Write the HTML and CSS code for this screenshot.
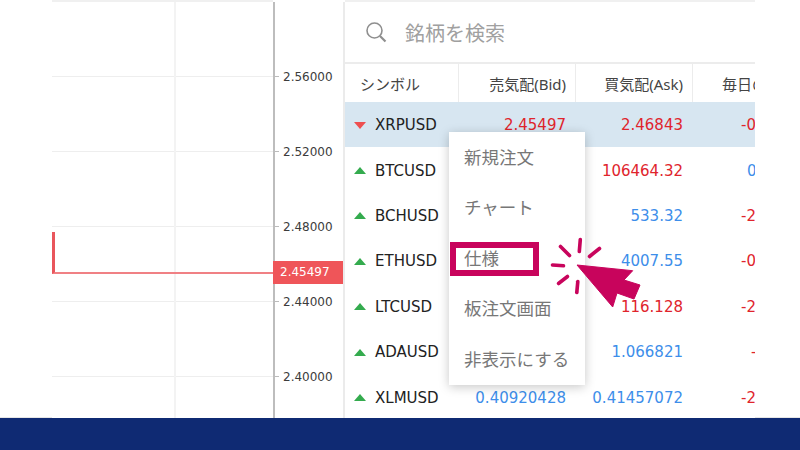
FILE: index.html
```html
<!DOCTYPE html>
<html lang="ja">
<head>
<meta charset="utf-8">
<title>銘柄</title>
<link rel="stylesheet" href="styles.css">
</head>
<body>
<div class="stage">
  <div class="main">
    <div class="chart">
      <div class="price-line"></div>
    </div>
    <div class="axis">
      <div class="tick">2.56000</div>
      <div class="tick">2.52000</div>
      <div class="tick">2.48000</div>
      <div class="tick">2.44000</div>
      <div class="tick">2.40000</div>
      <div class="price-tag">2.45497</div>
    </div>
    <div class="panel">
      <div class="search">
        <svg class="search-icon" width="22" height="22" viewBox="0 0 22 22"><circle cx="9.5" cy="9.5" r="7.5" fill="none" stroke="#8f8f8f" stroke-width="1.6"/><path d="M15 15l5.500 5.500" stroke="#8f8f8f" stroke-width="2.2" fill="none"/></svg>
        <span>銘柄を検索</span>
      </div>
      <div class="row head">
        <div class="c sym">シンボル</div><div class="c num">売気配(Bid)</div><div class="c num">買気配(Ask)</div><div class="c day">毎日の</div>
      </div>
      <div class="row sel">
        <div class="c sym"><i class="dn"></i>XRPUSD</div><div class="c num red">2.45497</div><div class="c num red">2.46843</div><div class="c day red">-0.55%</div>
      </div>
      <div class="row">
        <div class="c sym"><i class="up"></i>BTCUSD</div><div class="c num red">106123.32</div><div class="c num red">106464.32</div><div class="c day blue pos">0.12%</div>
      </div>
      <div class="row">
        <div class="c sym"><i class="up"></i>BCHUSD</div><div class="c num blue">530.32</div><div class="c num blue">533.32</div><div class="c day red">-2.10%</div>
      </div>
      <div class="row">
        <div class="c sym"><i class="up"></i>ETHUSD</div><div class="c num blue">4001.55</div><div class="c num blue">4007.55</div><div class="c day red">-0.32%</div>
      </div>
      <div class="row">
        <div class="c sym"><i class="up"></i>LTCUSD</div><div class="c num red">115.128</div><div class="c num red">116.128</div><div class="c day red">-2.05%</div>
      </div>
      <div class="row">
        <div class="c sym"><i class="up"></i>ADAUSD</div><div class="c num blue">1.056821</div><div class="c num blue">1.066821</div><div class="c day red dash">-</div>
      </div>
      <div class="row">
        <div class="c sym"><i class="up"></i>XLMUSD</div><div class="c num blue">0.40920428</div><div class="c num blue">0.41457072</div><div class="c day red">-2.40%</div>
      </div>
    </div>
  </div>
  <div class="footer"></div>

  <div class="menu">
    <div class="item">新規注文</div>
    <div class="item">チャート</div>
    <div class="item">仕様</div>
    <div class="item">板注文画面</div>
    <div class="item">非表示にする</div>
  </div>
  <div class="mark"></div>
  <svg class="pointer" width="100" height="80" viewBox="545 235 100 80">
    <path d="M577 265L632.7 270.7L624 280L640 285L634 299L617 293L612.7 307Z" fill="#c8045c" stroke="#c8045c" stroke-width="1" stroke-linejoin="round"/>
    <g stroke="#c8045c" stroke-width="3.6" stroke-linecap="round" fill="none">
      <path d="M580.300 239.500L579.300 251.500"/>
      <path d="M599.500 248.500L589.500 256.500"/>
      <path d="M560.500 246.500L569.500 255.500"/>
      <path d="M552.500 265L563.500 265.800"/>
      <path d="M567.500 276.500L558.500 283.500"/>
      <path d="M577.800 281.500L576.800 292.500"/>
    </g>
  </svg>
</div>
</body>
</html>
```
FILE: styles.css
```css
* { box-sizing: border-box; }
html, body { margin: 0; padding: 0; background: #fff; }
body { font-family: "DejaVu Sans", "Noto Sans CJK JP", sans-serif; }
.stage { position: relative; width: 800px; height: 450px; overflow: hidden; display: flex; flex-direction: column; background: #fff; }
.main {
  height: 418px;
  flex: none;
  display: flex;
  padding-left: 52px;
  background:
    linear-gradient(#e6e6e6, #e6e6e6) 0 100% / 52px 1px no-repeat,
    linear-gradient(#e6e6e6, #e6e6e6) 100% 100% / 45px 1px no-repeat;
}
.footer { height: 32px; flex: none; background: #0f2a73; }

.chart {
  position: relative;
  width: 221px;
  border-top: 2px solid #f0f0f0;
  background:
    linear-gradient(#f3f3f3, #f3f3f3) 122px 0 / 2px 100% no-repeat,
    repeating-linear-gradient(to bottom, transparent 0, transparent 74px, #eeeeee 74px, #eeeeee 75px) 0 0 / 100% 100%;
}
.price-line { position: absolute; left: 0; top: 230px; width: 221px; height: 42px; border-left: 3px solid #e9565c; border-bottom: 2px solid #f08084; }

.axis {
  position: relative;
  width: 72px;
  border-left: 2px solid #bdbdbd;
  border-right: 2px solid #ebebeb;
  margin-top: 2px;
  padding-top: 37px;
  display: flex;
  flex-direction: column;
}
.tick { height: 75px; flex: none; display: flex; align-items: center; padding: 1px 0 0 8px; font-size: 12px; color: #3c3c3c; position: relative; }
.tick::before { content: ""; position: absolute; left: 0; top: 37px; width: 4px; height: 1px; background: #bbb; }
.price-tag { position: absolute; left: -2px; top: 259px; width: 70px; height: 23px; background: #ef5559; color: #fff; font-size: 12px; line-height: 23px; padding-left: 7px; }

.panel { width: 410px; display: flex; flex-direction: column; overflow: hidden; border-top: 2px solid #f0f0f0; }
.search { height: 62px; flex: none; display: flex; align-items: center; gap: 18px; padding-left: 20px; border-bottom: 2px solid #ececec; font-size: 20px; color: #a0a0a0; font-family: "Noto Sans CJK JP", sans-serif; }
.search-icon { flex: none; }
.row { display: grid; flex: none; grid-template-columns: 113px 117px 117px 63px; height: 45.4px; padding-top: 1px; align-items: center; font-size: 15px; color: #222; white-space: nowrap; }
.row.head { height: 38px; padding-top: 0; font-size: 15px; color: #444; font-family: "Noto Sans", "Noto Sans CJK JP", sans-serif; }
.row.head .c { height: 100%; display: flex; align-items: center; }
.row.head .c + .c { border-left: 1px solid #ececec; }
.row.head .num { justify-content: flex-end; }
.row.head .sym { padding-left: 15px; }
.sel { background: #d7e6f1; }
.c { min-width: 0; overflow: hidden; }
.sym { display: flex; align-items: center; padding-left: 9px; }
.num { text-align: right; padding-right: 9px; }
.day { padding-left: 49px; overflow: hidden; }
.row.head .day { padding-left: 29px; }
.pos { padding-left: 55px; }
.dash { padding-left: 59px; }
.red { color: #e0242c; }
.blue { color: #3d8eea; }
.up, .dn { display: inline-block; width: 0; height: 0; margin-right: 9px; border-left: 6px solid transparent; border-right: 6px solid transparent; }
.up { border-bottom: 7px solid #34ab4e; }
.dn { border-top: 7px solid #ee4f50; }

.menu { position: absolute; left: 449px; top: 132px; width: 136px; height: 253px; background: #fff; box-shadow: 0 2px 10px rgba(0,0,0,.22); }
.item { height: 50.5px; display: flex; align-items: center; padding: 0 0 2px 15px; font-size: 17.500px; color: #777; white-space: nowrap; }
.mark { position: absolute; left: 450px; top: 242px; width: 89px; height: 34px; border: 6px solid #c8045c; }
.pointer { position: absolute; left: 545px; top: 235px; }
```
